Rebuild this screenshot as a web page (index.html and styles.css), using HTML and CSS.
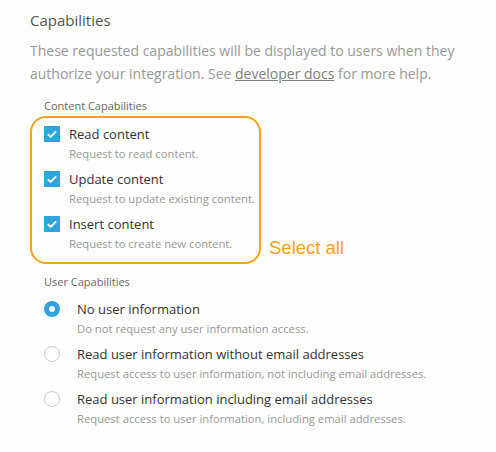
FILE: index.html
```html
<!DOCTYPE html>
<html>
<head>
<meta charset="utf-8">
<link rel="stylesheet" href="styles.css">
</head>
<body>
<div class="page">
  <h2 class="title">Capabilities</h2>
  <p class="intro">These requested capabilities will be displayed to users when they authorize your integration. See <a class="link">developer docs</a> for more help.</p>

  <div class="group">
    <div class="group-label">Content Capabilities</div>
    <div class="content-row">
      <div class="box">
        <div class="opt check">
          <span class="cb"><svg width="16" height="16" viewBox="0 0 16 16"><path d="M3.8 8.2 L6.6 10.9 L12.2 5.4" fill="none" stroke="#fff" stroke-width="1.8"/></svg></span>
          <div class="txt"><div class="lbl">Read content</div><div class="desc">Request to read content.</div></div>
        </div>
        <div class="opt check">
          <span class="cb"><svg width="16" height="16" viewBox="0 0 16 16"><path d="M3.8 8.2 L6.6 10.9 L12.2 5.4" fill="none" stroke="#fff" stroke-width="1.8"/></svg></span>
          <div class="txt"><div class="lbl">Update content</div><div class="desc">Request to update existing content.</div></div>
        </div>
        <div class="opt check">
          <span class="cb"><svg width="16" height="16" viewBox="0 0 16 16"><path d="M3.8 8.2 L6.6 10.9 L12.2 5.4" fill="none" stroke="#fff" stroke-width="1.8"/></svg></span>
          <div class="txt"><div class="lbl">Insert content</div><div class="desc">Request to create new content.</div></div>
        </div>
      </div>
      <div class="select-all">Select all</div>
    </div>
  </div>

  <div class="group user">
    <div class="group-label">User Capabilities</div>
    <div class="opt radio">
      <span class="rb on"></span>
      <div class="txt"><div class="lbl">No user information</div><div class="desc">Do not request any user information access.</div></div>
    </div>
    <div class="opt radio">
      <span class="rb"></span>
      <div class="txt"><div class="lbl">Read user information without email addresses</div><div class="desc">Request access to user information, not including email addresses.</div></div>
    </div>
    <div class="opt radio">
      <span class="rb"></span>
      <div class="txt"><div class="lbl">Read user information including email addresses</div><div class="desc">Request access to user information, including email addresses.</div></div>
    </div>
  </div>
</div>
</body>
</html>
```

FILE: styles.css
```css
html, body {
  margin: 0;
  padding: 0;
  background: #fdfdfc;
}
body {
  font-family: "Open Sans", "Noto Sans", "Liberation Sans", sans-serif;
  color: #333;
}
.page {
  padding: 10px 0 0 30px;
}
.title {
  margin: 0;
  font-size: 15px;
  font-weight: 400;
  color: #555;
  line-height: 20px;
}
.intro {
  margin: 9px 0 0 0;
  font-size: 14px;
  line-height: 23px;
  color: #999;
  width: 450px;
}
.link {
  color: #808080;
  text-decoration: underline;
}
.group {
  margin-top: 14px;
}
.group-label {
  font-size: 11px;
  color: #666;
  line-height: 14px;
  padding-left: 14px;
}
.content-row {
  display: flex;
  align-items: flex-end;
  margin-top: 3px;
}
.box {
  width: 215px;
  border: 2px solid #f9a11b;
  border-radius: 16px;
  padding: 7px 0 7px 12px;
}
.select-all {
  color: #f9a11b;
  font-size: 18.5px;
  line-height: 22px;
  margin: 0 0 5px 8px;
  font-family: "Liberation Sans", sans-serif;
}
.opt {
  display: flex;
  align-items: flex-start;
}
.check + .check {
  margin-top: 5px;
}
.cb {
  width: 16px;
  height: 16px;
  background: #2fa3dc;
  flex: none;
  margin-top: 1px;
  margin-right: 9px;
  display: block;
}
.cb svg { display: block; }
.lbl {
  font-size: 13px;
  line-height: 18px;
  color: #333;
}
.desc {
  font-size: 11.25px;
  line-height: 22px;
  color: #999;
}
.user {
  margin-top: 11px;
  padding-left: 14px;
}
.user .group-label {
  padding-left: 0;
  margin-bottom: 11px;
}
.radio + .radio {
  margin-top: 5px;
}
.rb {
  width: 16px;
  height: 16px;
  box-sizing: border-box;
  border: 1px solid #ccc;
  border-radius: 50%;
  background: #fff;
  flex: none;
  margin-top: 1px;
  margin-right: 17px;
}
.rb.on {
  border: 5px solid #2fa3dc;
  background: #fff;
}
```
